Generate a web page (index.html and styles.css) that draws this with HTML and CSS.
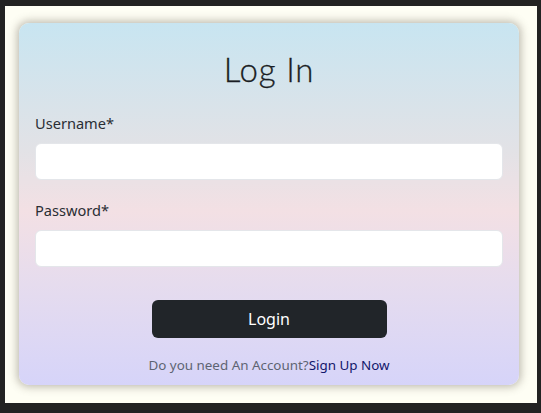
FILE: index.html
```html
<!DOCTYPE html>
<html lang="en">
<head>
<meta charset="utf-8">
<title>Log In</title>
<link rel="stylesheet" href="styles.css">
</head>
<body>
<div class="frame">
  <form class="card">
    <h2 class="title">Log In</h2>
    <div class="field">
      <label class="label" for="username">Username*</label>
      <input class="input" id="username" type="text">
    </div>
    <div class="field">
      <label class="label" for="password">Password*</label>
      <input class="input" id="password" type="password">
    </div>
    <div class="actions">
      <button class="btn" type="button">Login</button>
    </div>
    <p class="note">Do you need An Account?<a class="link" href="#">Sign Up Now</a></p>
  </form>
</div>
</body>
</html>
```

FILE: styles.css
```css
html {
  background: #222222;
}
body {
  margin: 0;
  padding: 6px 4px 10px 5px;
  font-family: "Noto Sans", "Open Sans", sans-serif;
  color: #212529;
}
.frame {
  background: #fefef4;
  height: 397px;
  box-sizing: border-box;
  padding: 17px 18px 18px 14px;
}
.card {
  height: 362px;
  box-sizing: border-box;
  border-radius: 10px;
  background: linear-gradient(180deg, #c8e5f1 0%, #e2e2e6 35%, #f3e0e4 52%, #e6dcee 72%, #d6d4f9 100%);
  box-shadow: 0 0 9px 2px rgba(110, 105, 90, 0.45);
  padding: 24px 16px 0 16px;
  display: flex;
  flex-direction: column;
}
.title {
  margin: 0 0 20px;
  text-align: center;
  font-family: "Lato", sans-serif;
  font-weight: 300;
  font-size: 33px;
  line-height: 44px;
  color: #1a1d23;
  letter-spacing: 0.8px;
  -webkit-text-stroke: 0.3px #1a1d23;
}
.field {
  display: flex;
  flex-direction: column;
  margin-bottom: 18px;
}
.label {
  font-size: 14.6px;
  line-height: 24px;
  margin-bottom: 8px;
  color: #2a2e34;
}
.input {
  height: 37px;
  box-sizing: border-box;
  border: 1px solid #e4e6ea;
  border-radius: 6px;
  background: #ffffff;
  margin: 0;
  flex: none;
}
.actions {
  display: flex;
  justify-content: center;
  margin-top: 15px;
}
.btn {
  width: 235px;
  height: 38px;
  border: none;
  border-radius: 6px;
  background: #212529;
  color: #ffffff;
  font-family: "Noto Sans", sans-serif;
  font-size: 16px;
}
.note {
  margin: 17px 0 0;
  text-align: center;
  font-size: 13.4px;
  line-height: 20px;
  color: #5e6472;
}
.link {
  color: #13176b;
  text-decoration: none;
}
```
